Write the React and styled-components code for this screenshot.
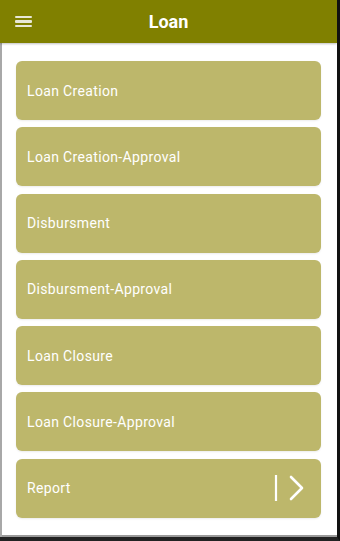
import React from "react";
import styled, { createGlobalStyle } from "styled-components";

const Global = createGlobalStyle`
  html, body { margin: 0; padding: 0; background: #fff; }
  body { font-family: Roboto, "Noto Sans", "Liberation Sans", sans-serif; }
`;

const Frame = styled.div`
  width: 340px;
  height: 541px;
  box-sizing: border-box;
  display: flex;
  flex-direction: column;
  border-right: 3px solid #111;
  border-bottom: 4px solid #222;
  box-shadow: inset 0 -2px 0 #9a9a9a;
  overflow: hidden;
`;

const Header = styled.header`
  height: 43px;
  flex: none;
  background: #808000;
  display: flex;
  align-items: center;
  position: relative;
  box-shadow: 0 1px 2px rgba(0,0,0,0.25);
  z-index: 1;
`;

const MenuButton = styled.div`
  width: 17px;
  height: 11px;
  margin-left: 15px;
  display: flex;
  flex-direction: column;
  justify-content: space-between;
  span {
    display: block;
    height: 2.4px;
    background: #e8e8d8;
    border-radius: 1px;
  }
`;

const Title = styled.h1`
  position: absolute;
  left: 0;
  right: 0;
  margin: 0;
  text-align: center;
  color: #fff;
  font-size: 18px;
  font-weight: 700;
  pointer-events: none;
`;

const Body = styled.main`
  flex: 1;
  border-left: 2px solid #a8a8a8;
  padding: 18px 16px 0 14px;
  display: flex;
  flex-direction: column;
  gap: 7.3px;
`;

const Card = styled.div`
  height: 59px;
  background: #bdb76b;
  border-radius: 6px;
  display: flex;
  align-items: center;
  justify-content: space-between;
  padding: 0 15px 0 11px;
  color: #fff;
  font-size: 14px;
  letter-spacing: 0.35px;
  box-shadow: 0 1px 2px rgba(0,0,0,0.08);
`;

const Arrow = styled.svg`
  width: 32px;
  height: 30px;
  display: block;
`;

const items = [
  "Loan Creation",
  "Loan Creation-Approval",
  "Disbursment",
  "Disbursment-Approval",
  "Loan Closure",
  "Loan Closure-Approval",
];

export default function App() {
  return (
    <>
      <Global />
      <Frame>
        <Header>
          <MenuButton>
            <span />
            <span />
            <span />
          </MenuButton>
          <Title>Loan</Title>
        </Header>
        <Body>
          {items.map((t) => (
            <Card key={t}>{t}</Card>
          ))}
          <Card>
            Report
            <Arrow viewBox="0 0 32 30">
              <line x1="2" y1="2" x2="2" y2="28" stroke="#fff" strokeWidth="2.2" />
              <polyline points="17,4 28,15 17,26" fill="none" stroke="#fff" strokeWidth="2.6" strokeLinecap="round" strokeLinejoin="round" />
            </Arrow>
          </Card>
        </Body>
      </Frame>
    </>
  );
}
